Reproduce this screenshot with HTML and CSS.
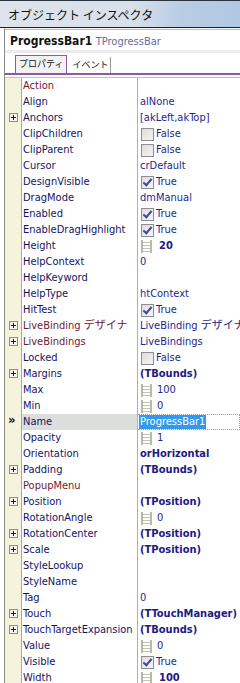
FILE: index.html
```html
<!DOCTYPE html>
<html>
<head>
<meta charset="utf-8">
<link rel="stylesheet" href="styles.css">
</head>
<body>
<div class="title">オブジェクト インスペクタ</div>
<div class="panel">
  <div class="header"><b>ProgressBar1</b> <span class="cls">TProgressBar</span></div>
  <div class="band"></div>
  <div class="tabs">
    <div class="tab sel">プロパティ</div>
    <div class="tab">イベント</div>
  </div>
  <div class="grid">
    <div class="row"><div class="gut"></div><div class="name ref">Action</div><div class="val"></div></div>
    <div class="row"><div class="gut"></div><div class="name">Align</div><div class="val">alNone</div></div>
    <div class="row"><div class="gut"><span class="plus"></span></div><div class="name">Anchors</div><div class="val">[akLeft,akTop]</div></div>
    <div class="row"><div class="gut"></div><div class="name">ClipChildren</div><div class="val"><span class="cb"></span>False</div></div>
    <div class="row"><div class="gut"></div><div class="name">ClipParent</div><div class="val"><span class="cb"></span>False</div></div>
    <div class="row"><div class="gut"></div><div class="name">Cursor</div><div class="val">crDefault</div></div>
    <div class="row"><div class="gut"></div><div class="name">DesignVisible</div><div class="val"><span class="cb on"></span>True</div></div>
    <div class="row"><div class="gut"></div><div class="name">DragMode</div><div class="val">dmManual</div></div>
    <div class="row"><div class="gut"></div><div class="name">Enabled</div><div class="val"><span class="cb on"></span>True</div></div>
    <div class="row"><div class="gut"></div><div class="name">EnableDragHighlight</div><div class="val"><span class="cb on"></span>True</div></div>
    <div class="row"><div class="gut"></div><div class="name">Height</div><div class="val"><span class="num"></span><b class="bn">20</b></div></div>
    <div class="row"><div class="gut"></div><div class="name">HelpContext</div><div class="val">0</div></div>
    <div class="row"><div class="gut"></div><div class="name">HelpKeyword</div><div class="val"></div></div>
    <div class="row"><div class="gut"></div><div class="name">HelpType</div><div class="val">htContext</div></div>
    <div class="row"><div class="gut"></div><div class="name">HitTest</div><div class="val"><span class="cb on"></span>True</div></div>
    <div class="row"><div class="gut"><span class="plus"></span></div><div class="name ref">LiveBinding デザイナ</div><div class="val">LiveBinding デザイナ</div></div>
    <div class="row"><div class="gut"><span class="plus"></span></div><div class="name ref">LiveBindings</div><div class="val">LiveBindings</div></div>
    <div class="row"><div class="gut"></div><div class="name">Locked</div><div class="val"><span class="cb"></span>False</div></div>
    <div class="row"><div class="gut"><span class="plus"></span></div><div class="name">Margins</div><div class="val"><b>(TBounds)</b></div></div>
    <div class="row"><div class="gut"></div><div class="name">Max</div><div class="val"><span class="num"></span>100</div></div>
    <div class="row"><div class="gut"></div><div class="name">Min</div><div class="val"><span class="num"></span>0</div></div>
    <div class="row cur"><div class="gut"><span class="arrow">»</span></div><div class="name">Name</div><div class="val"><span class="selv">ProgressBar1</span></div></div>
    <div class="row"><div class="gut"></div><div class="name">Opacity</div><div class="val"><span class="num"></span>1</div></div>
    <div class="row"><div class="gut"></div><div class="name">Orientation</div><div class="val"><b>orHorizontal</b></div></div>
    <div class="row"><div class="gut"><span class="plus"></span></div><div class="name">Padding</div><div class="val"><b>(TBounds)</b></div></div>
    <div class="row"><div class="gut"></div><div class="name ref">PopupMenu</div><div class="val"></div></div>
    <div class="row"><div class="gut"><span class="plus"></span></div><div class="name">Position</div><div class="val"><b>(TPosition)</b></div></div>
    <div class="row"><div class="gut"></div><div class="name">RotationAngle</div><div class="val"><span class="num"></span>0</div></div>
    <div class="row"><div class="gut"><span class="plus"></span></div><div class="name">RotationCenter</div><div class="val"><b>(TPosition)</b></div></div>
    <div class="row"><div class="gut"><span class="plus"></span></div><div class="name">Scale</div><div class="val"><b>(TPosition)</b></div></div>
    <div class="row"><div class="gut"></div><div class="name">StyleLookup</div><div class="val"></div></div>
    <div class="row"><div class="gut"></div><div class="name">StyleName</div><div class="val"></div></div>
    <div class="row"><div class="gut"></div><div class="name">Tag</div><div class="val">0</div></div>
    <div class="row"><div class="gut"><span class="plus"></span></div><div class="name">Touch</div><div class="val"><b>(TTouchManager)</b></div></div>
    <div class="row"><div class="gut"><span class="plus"></span></div><div class="name">TouchTargetExpansion</div><div class="val"><b>(TBounds)</b></div></div>
    <div class="row"><div class="gut"></div><div class="name">Value</div><div class="val"><span class="num"></span>0</div></div>
    <div class="row"><div class="gut"></div><div class="name">Visible</div><div class="val"><span class="cb on"></span>True</div></div>
    <div class="row"><div class="gut"></div><div class="name">Width</div><div class="val"><span class="num"></span><b class="bn">100</b></div></div>
  </div>
</div>
</body>
</html>
```
FILE: styles.css
```css
html, body { margin: 0; padding: 0; }
body {
  width: 240px; height: 683px; overflow: hidden; background: #ffffff;
  font-family: "DejaVu Sans Condensed", "DejaVu Sans", "Noto Sans CJK JP", sans-serif;
  font-size: 11px;
}
.title {
  height: 26px; line-height: 27px; padding-left: 8px;
  border-top: 1px solid #2a3440;
  border-bottom: 1px solid #202020;
  background: linear-gradient(90deg, #dfe3ea 0%, #d8e0ea 55%, #b9cde4 75%, #b0c8e2 100%);
  font-family: "Noto Sans CJK JP", sans-serif; font-size: 12px; color: #111;
}
.panel {
  margin-left: 4px; border-left: 1px solid #8a8a8a; height: 660px;
  border-top: 1px solid #f4f4f4;
}
.header {
  height: 20px; line-height: 22px; padding-left: 5px;
  border-top: 1px solid #b4c4c0; background: #fff;
  font-family: "DejaVu Sans Condensed", "DejaVu Sans", sans-serif; font-size: 12px; white-space: nowrap;
}
.header b { color: #111; }
.cls { color: #6a6aa0; font-size: 11px; }
.band { height: 3px; background: #ebebf0; }
.tabs {
  height: 18px; display: flex; align-items: flex-end; padding-left: 10px;
  border-bottom: 2px solid #8a5aa6; margin-top: 2px;
}
.tab {
  font-family: "Noto Sans CJK JP", sans-serif; font-size: 9px;
  height: 16px; line-height: 16px; padding: 0 2px; color: #111;
  border-right: 1px solid #9a9a9a;
}
.tab.sel {
  border: 1px solid #8a5aa6; border-bottom: none; background: #f2f2f4;
  height: 17px; padding: 0 3px; margin-right: 3px;
}
.grid { border-top: 1px solid #b4c8c0; margin-top: 2px; }
.row { display: flex; height: 16px; line-height: 16px; white-space: nowrap; }
.gut {
  width: 16px; background: #f6f3dc; border-right: 1px solid #a8a8a8;
  position: relative;
}
.name {
  width: 114px; padding-left: 1px; border-right: 1px solid #a8b4b0; color: #14145e;
  overflow: hidden;
}
.name.ref { color: #701830; }
.val {
  flex: 1; padding-left: 2px; color: #1a2a8c; overflow: hidden;
  display: flex; align-items: center;
}
.val b { color: #1a2080; }
.val b.bn { margin-left: 2px; }
.plus {
  position: absolute; left: 4px; top: 3px; width: 7px; height: 7px;
  border: 1px solid #8c8c8c; background: #f4f4f0;
}
.plus::before { content: ""; position: absolute; left: 1px; top: 3px; width: 5px; height: 1px; background: #222; }
.plus::after { content: ""; position: absolute; left: 3px; top: 1px; width: 1px; height: 5px; background: #222; }
.arrow {
  position: absolute; left: 3px; top: -2px; font-weight: bold; font-size: 13px; color: #111;
}
.cb {
  width: 11px; height: 11px; border: 1px solid #8e8e8e; margin-right: 2px; margin-left: 1px;
  background: linear-gradient(135deg, #dcdcdc, #f6f6f6); position: relative; flex: none;
}
.cb.on::after {
  content: ""; position: absolute; left: 3px; top: 0px; width: 3px; height: 7px;
  border: solid #3848a8; border-width: 0 2px 2px 0; transform: rotate(40deg);
}
.num {
  width: 11px; height: 13px; margin-left: 1px; margin-right: 5px; flex: none;
  border-left: 2px solid #b4bca8; border-right: 2px solid #b4bca8; box-sizing: border-box;
  background: repeating-linear-gradient(180deg, transparent 0 2px, #c0c8b4 2px 3px);
}
.row.cur .name { background: #dcdedc; }
.row.cur .val { padding-left: 1px; border: 1px dotted #9a9a9a; border-left: none; height: 14px; }
.selv { background: #3399ee; color: #fff; line-height: 14px; padding: 0 1px; }
```
